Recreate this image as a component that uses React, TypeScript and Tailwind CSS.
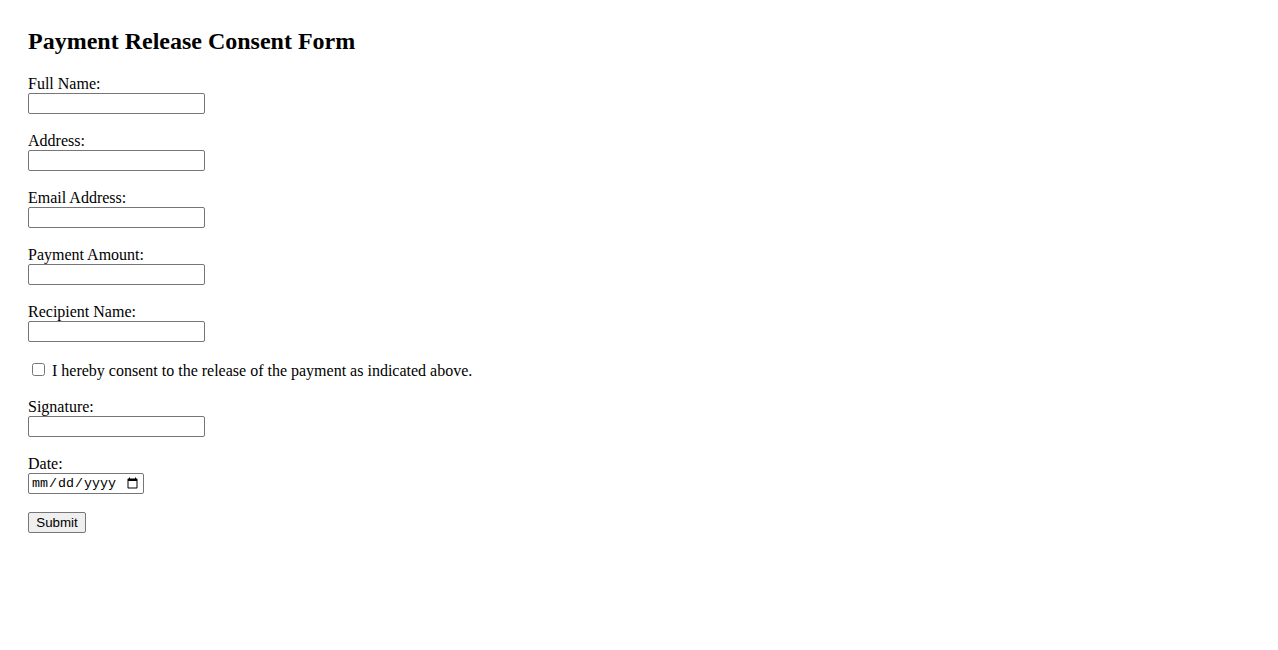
const fields = ["Full Name:", "Address:", "Email Address:", "Payment Amount:", "Recipient Name:"];

function TextField({ label }: { label: string }) {
  return (
    <div className="mb-[18px]">
      <label className="block leading-[18px]">{label}</label>
      <input
        type="text"
        className="block h-[21px] w-[177px] rounded-[2px] border border-[#767676] bg-white px-[2px] text-[13.33px]"
      />
    </div>
  );
}

export default function App() {
  return (
    <div className="min-h-screen bg-white px-[28px] pt-[27px] text-[16px] text-black [font-family:'Liberation_Serif','Times_New_Roman',serif]">
      <h2 className="mb-[20px] text-[24px] font-bold leading-[28px]">Payment Release Consent Form</h2>
      <form>
        {fields.map((f) => (
          <TextField key={f} label={f} />
        ))}
        <div className="mb-[18px] flex items-center pt-[1px] leading-[19px]">
          <input type="checkbox" className="mr-[7px] ml-[4px] mb-[3px] h-[13px] w-[13px]" />
          <span>I hereby consent to the release of the payment as indicated above.</span>
        </div>
        <TextField label="Signature:" />
        <div className="mb-[18px]">
          <label className="block leading-[18px]">Date:</label>
          <input
            type="date"
            className="block h-[21px] w-[116px] rounded-[2px] border border-[#767676] bg-white px-[2px] text-[13.33px] [font-family:'Liberation_Mono',monospace]"
          />
        </div>
        <button
          type="submit"
          className="block h-[21px] w-[58px] rounded-[2px] border border-[#767676] bg-[#efefef] text-[13.33px] leading-none [font-family:'Liberation_Sans',Arial,sans-serif]"
        >
          Submit
        </button>
      </form>
    </div>
  );
}
